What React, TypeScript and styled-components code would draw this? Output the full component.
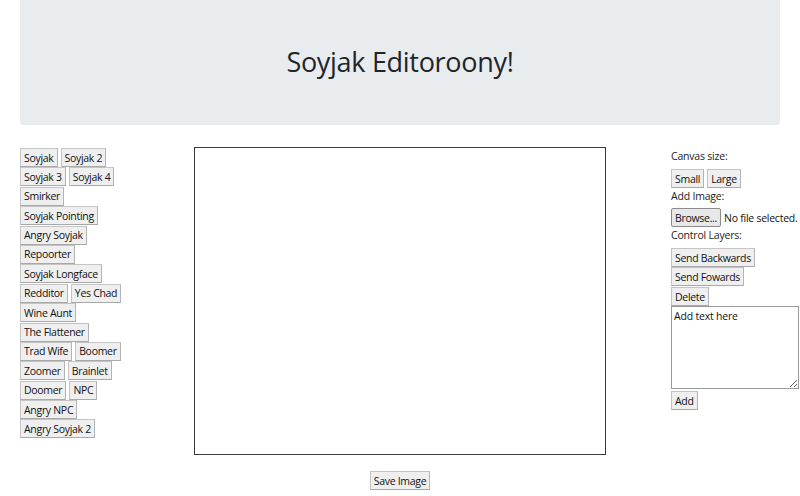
import React from "react";
import styled, { createGlobalStyle } from "styled-components";

const GlobalStyle = createGlobalStyle`
  html, body {
    margin: 0;
    padding: 0;
    background: #ffffff;
    font-family: "Open Sans", "Liberation Sans", sans-serif;
    color: #212529;
  }
`;

const Page = styled.div`
  width: 800px;
  height: 496px;
  overflow: hidden;
`;

const Header = styled.header`
  margin: 0 20px;
  height: 125px;
  background: #e9ecef;
  border-radius: 0 0 3px 3px;
  display: flex;
  align-items: center;
  justify-content: center;
`;

const Title = styled.h1`
  margin: 0 0 2px;
  font-size: 27px;
  font-weight: 400;
  letter-spacing: -0.3px;
`;

const Workspace = styled.div`
  display: flex;
  align-items: flex-start;
  margin-top: 22px;
  padding-left: 20px;
`;

const Sidebar = styled.div`
  width: 174px;
  display: flex;
  flex-direction: column;
  gap: 0.4px;
  padding-top: 1px;
`;

const ButtonRow = styled.div`
  display: flex;
  gap: 3px;
`;

const Button = styled.button<{ $mt?: number }>`
  height: 19px;
  padding: 0 3px;
  margin-top: ${(p) => p.$mt ?? 0}px;
  font-family: "Open Sans", "Liberation Sans", sans-serif;
  font-size: 10.5px;
  letter-spacing: -0.3px;
  color: #111;
  background: #efefef;
  border: 1px solid #c4c4c4;
  border-bottom-color: #a8a8a8;
  border-right-color: #b4b4b4;
  border-radius: 0;
  white-space: nowrap;
  cursor: pointer;
`;

const CenterColumn = styled.div`
  width: 412px;
  display: flex;
  flex-direction: column;
  align-items: center;
  gap: 16px;
`;

const Canvas = styled.div`
  width: 410px;
  height: 306px;
  border: 1px solid #3a3a3a;
  background: #ffffff;
  align-self: stretch;
`;

const Controls = styled.div`
  margin-left: 65px;
  width: 129px;
  display: flex;
  flex-direction: column;
  align-items: flex-start;
`;

const Label = styled.div<{ $mt?: number; $mb: number }>`
  font-size: 10.5px;
  letter-spacing: -0.2px;
  color: #222;
  line-height: 16px;
  margin-top: ${(p) => p.$mt ?? 0}px;
  margin-bottom: ${(p) => p.$mb}px;
`;

const FileRow = styled.div`
  display: flex;
  align-items: center;
  gap: 3px;
  font-size: 10.5px;
  letter-spacing: -0.25px;
  color: #111;
  white-space: nowrap;
`;

const BrowseButton = styled(Button)`
  border-color: #8a8a8a;
  border-radius: 2px;
  background: #e8e8e8;
`;

const TextBox = styled.textarea`
  width: 128px;
  height: 83px;
  box-sizing: border-box;
  resize: both;
  padding: 2px 2px;
  font-family: "Open Sans", "Liberation Sans", sans-serif;
  font-size: 10.5px;
  letter-spacing: -0.2px;
  color: #111;
  border: 1px solid #9a9a9a;
  border-radius: 0;
`;

const leftRows = [
  ["Soyjak", "Soyjak 2"],
  ["Soyjak 3", "Soyjak 4"],
  ["Smirker"],
  ["Soyjak Pointing"],
  ["Angry Soyjak"],
  ["Repoorter"],
  ["Soyjak Longface"],
  ["Redditor", "Yes Chad"],
  ["Wine Aunt"],
  ["The Flattener"],
  ["Trad Wife", "Boomer"],
  ["Zoomer", "Brainlet"],
  ["Doomer", "NPC"],
  ["Angry NPC"],
  ["Angry Soyjak 2"],
];

export default function App() {
  return (
    <Page>
      <GlobalStyle />
      <Header>
        <Title>Soyjak Editoroony!</Title>
      </Header>
      <Workspace>
        <Sidebar>
          {leftRows.map((row, i) => (
            <ButtonRow key={i}>
              {row.map((name) => (
                <Button key={name}>{name}</Button>
              ))}
            </ButtonRow>
          ))}
        </Sidebar>
        <CenterColumn>
          <Canvas />
          <Button>Save Image</Button>
        </CenterColumn>
        <Controls>
          <Label $mt={1} $mb={5}>Canvas size:</Label>
          <ButtonRow>
            <Button>Small</Button>
            <Button>Large</Button>
          </ButtonRow>
          <Label $mb={4}>Add Image:</Label>
          <FileRow>
            <BrowseButton>Browse...</BrowseButton>
            <span>No file selected.</span>
          </FileRow>
          <Label $mb={5}>Control Layers:</Label>
          <Button>Send Backwards</Button>
          <Button>Send Fowards</Button>
          <Button $mt={1}>Delete</Button>
          <TextBox defaultValue="Add text here" />
          <Button $mt={2}>Add</Button>
        </Controls>
      </Workspace>
    </Page>
  );
}
